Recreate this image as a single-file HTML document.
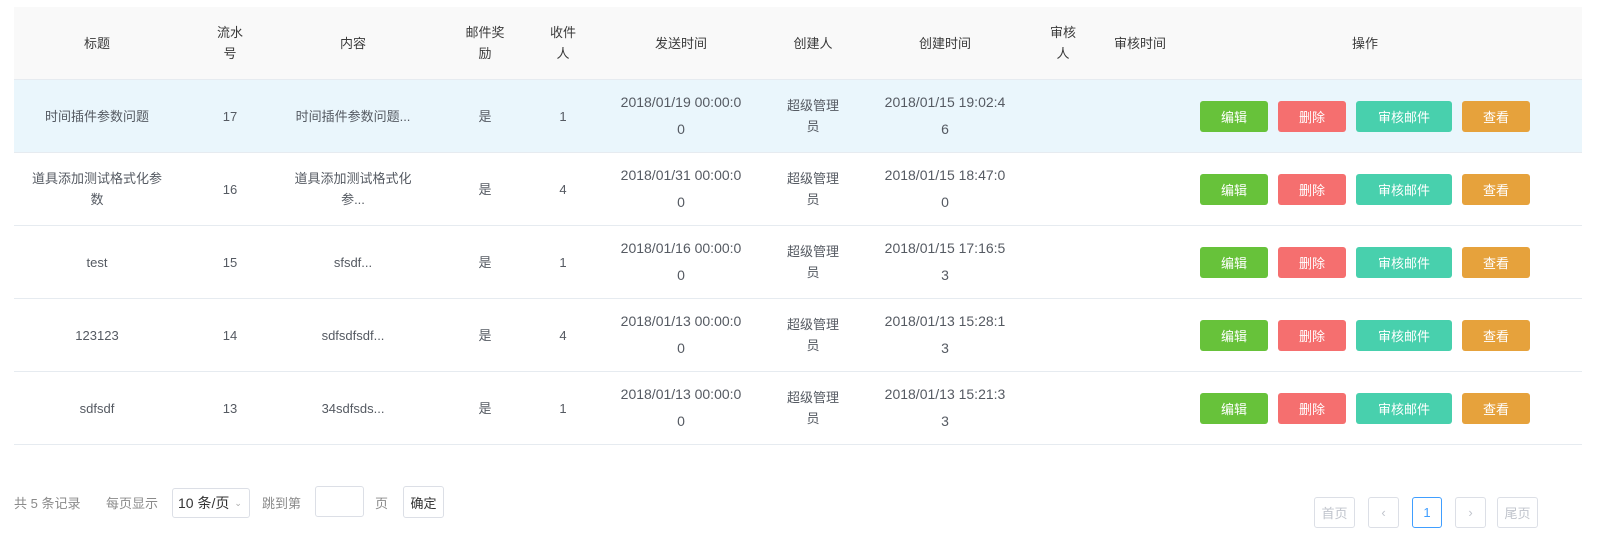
<!DOCTYPE html>
<html><head><meta charset="utf-8"><style>
*{margin:0;padding:0;box-sizing:border-box}
body{width:1606px;height:557px;background:#fff;font-family:"Liberation Sans","Noto Sans CJK SC",sans-serif;font-size:13px;color:#555a62;position:relative;overflow:hidden}
.a{position:absolute}
.hdr{left:14px;top:7px;width:1568px;height:73px;background:#f9f9f9;border-bottom:1px solid #e6ebf0}
.row{left:14px;width:1568px;height:73px;border-bottom:1px solid #e6ebf0}
.c{position:absolute;top:0;height:100%;display:flex;align-items:center;justify-content:center;text-align:center}
.hdr .c{color:#3a3a3a;line-height:21px}
.row .c{line-height:21px}
.row .c.t{line-height:27px;font-size:14px}
.b{position:absolute;top:21px;height:31px;border-radius:3px;color:#fff;display:flex;align-items:center;justify-content:center;font-size:13px}
.f{color:#8a8a8a;font-size:13px}
.box{position:absolute;border:1px solid #dcdfe6;border-radius:3px;background:#fff;display:flex;align-items:center;justify-content:center}
</style></head><body>
<div class="a hdr">
<div class="c" style="left:0;width:166px">标题</div>
<div class="c" style="left:196px;width:40px">流水<br>号</div>
<div class="c" style="left:266px;width:146px">内容</div>
<div class="c" style="left:446px;width:50px">邮件奖<br>励</div>
<div class="c" style="left:530px;width:38px">收件<br>人</div>
<div class="c" style="left:568px;width:198px">发送时间</div>
<div class="c" style="left:766px;width:66px">创建人</div>
<div class="c" style="left:832px;width:198px">创建时间</div>
<div class="c" style="left:1030px;width:38px">审核<br>人</div>
<div class="c" style="left:1068px;width:118px;justify-content:flex-start;padding-left:32px">审核时间</div>
<div class="c" style="left:1186px;width:330px">操作</div>
</div>

<div id="rows"></div>
<script>
var d=[["时间插件参数问题","17","时间插件参数问题...","1","2018/01/19","2018/01/15 19:02:4","6"],
["道具添加测试格式化参<br>数","16","道具添加测试格式化<br>参...","4","2018/01/31","2018/01/15 18:47:0","0"],
["test","15","sfsdf...","1","2018/01/16","2018/01/15 17:16:5","3"],
["123123","14","sdfsdfsdf...","4","2018/01/13","2018/01/13 15:28:1","3"],
["sdfsdf","13","34sdfsds...","1","2018/01/13","2018/01/13 15:21:3","3"]];
var h="";
d.forEach(function(r,i){
h+='<div class="a row" style="top:'+(80+i*73)+'px;'+(i==0?'background:#eaf6fc':'')+'">'+
'<div class="c" style="left:0;width:166px">'+r[0]+'</div>'+
'<div class="c" style="left:166px;width:100px">'+r[1]+'</div>'+
'<div class="c" style="left:266px;width:146px">'+r[2]+'</div>'+
'<div class="c" style="left:412px;width:118px">是</div>'+
'<div class="c" style="left:530px;width:38px">'+r[3]+'</div>'+
'<div class="c t" style="left:568px;width:198px">'+r[4]+' 00:00:0<br>0</div>'+
'<div class="c" style="left:766px;width:66px">超级管理<br>员</div>'+
'<div class="c t" style="left:832px;width:198px">'+r[5]+'<br>'+r[6]+'</div>'+
'<div class="b" style="left:1186px;width:68px;background:#67c23a">编辑</div>'+
'<div class="b" style="left:1264px;width:68px;background:#f56f6f">删除</div>'+
'<div class="b" style="left:1342px;width:96px;background:#48d0ad">审核邮件</div>'+
'<div class="b" style="left:1448px;width:68px;background:#e6a23c">查看</div>'+
'</div>';});
document.getElementById("rows").innerHTML=h;
</script>

<div class="a f" style="left:14px;top:493px">共 5 条记录</div>
<div class="a f" style="left:106px;top:493px">每页显示</div>
<div class="box" style="left:172px;top:488px;width:78px;height:30px;justify-content:flex-start;padding-left:5px;color:#333;font-size:14px">10 条/页 <span style="font-size:9px;color:#aaa;margin-left:5px">&#8964;</span></div>
<div class="a f" style="left:262px;top:493px">跳到第</div>
<div class="box" style="left:315px;top:486px;width:49px;height:31px"></div>
<div class="a f" style="left:375px;top:493px">页</div>
<div class="box" style="left:403px;top:486px;width:41px;height:32px;color:#333">确定</div>

<div class="box" style="left:1314px;top:497px;width:41px;height:31px;color:#c0c4cc">首页</div>
<div class="box" style="left:1368px;top:497px;width:31px;height:31px;color:#c0c4cc">&lsaquo;</div>
<div class="box" style="left:1412px;top:497px;width:30px;height:31px;border-color:#409eff;color:#409eff">1</div>
<div class="box" style="left:1455px;top:497px;width:31px;height:31px;color:#c0c4cc">&rsaquo;</div>
<div class="box" style="left:1497px;top:497px;width:41px;height:31px;color:#c0c4cc">尾页</div>
</body></html>
